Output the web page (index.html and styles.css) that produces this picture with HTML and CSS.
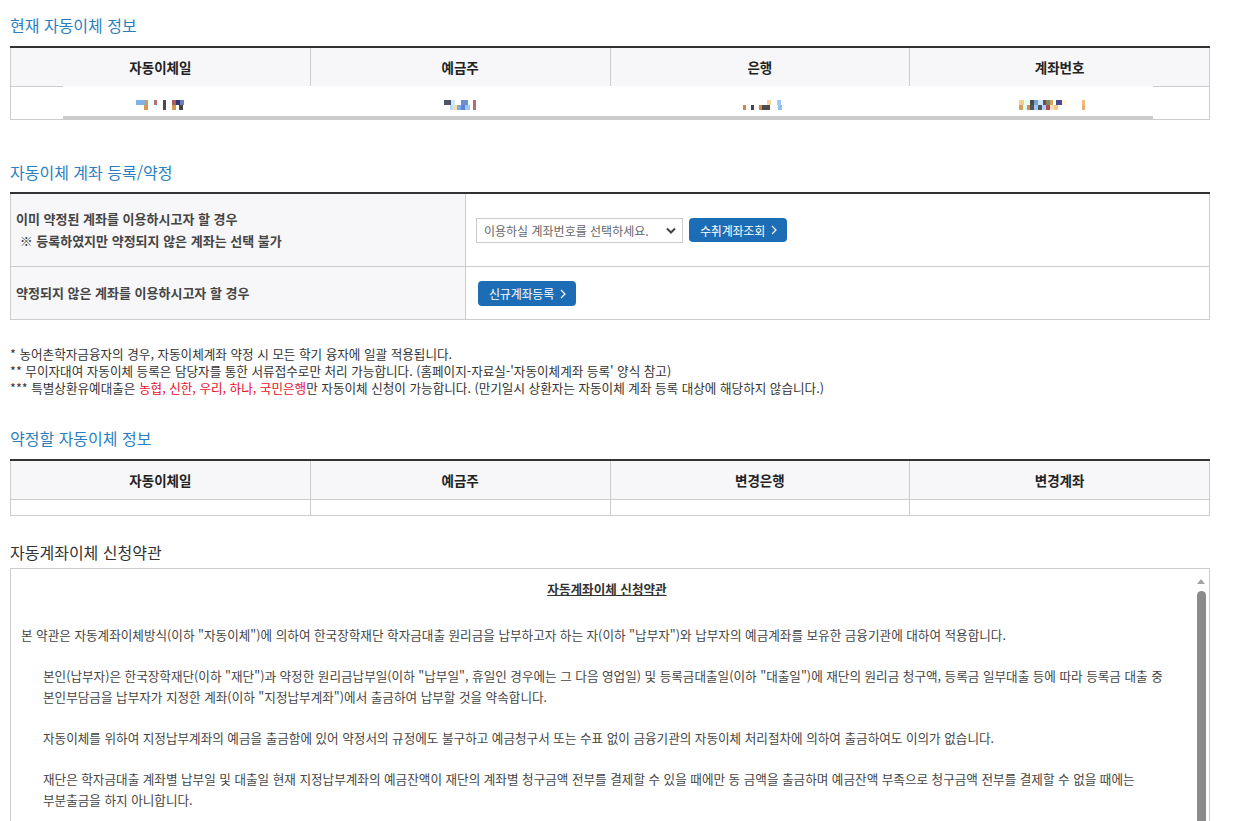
FILE: index.html
```html
<!DOCTYPE html>
<html lang="ko">
<head>
  <meta charset="UTF-8">
  <meta name="viewport" content="width=device-width, initial-scale=1.0">
  <title>자동이체 계좌 등록</title>
  <link rel="stylesheet" href="styles.css">
</head>
<body>
  <div class="page">

    <!-- Current auto transfer -->
    <h2 class="sec-title">현재 자동이체 정보</h2>
    <div class="grid-wrap">
      <table class="grid">
        <thead>
          <tr><th>자동이체일</th><th>예금주</th><th>은행</th><th>계좌번호</th></tr>
        </thead>
        <tbody>
          <tr>
            <td><span class="mosaic m-date"></span></td>
            <td><span class="mosaic m-owner"></span></td>
            <td><span class="mosaic m-bank"></span></td>
            <td><span class="mosaic m-acct"></span></td>
          </tr>
        </tbody>
      </table>
      <div class="mask"></div>
    </div>

    <!-- Register / agree -->
    <h2 class="sec-title sec-gap">자동이체 계좌 등록/약정</h2>
    <table class="form-grid">
      <tr class="row-tall">
        <th>이미 약정된 계좌를 이용하시고자 할 경우<br>&nbsp;※ 등록하였지만 약정되지 않은 계좌는 선택 불가</th>
        <td>
          <div class="field-line">
            <span class="select-box">
              <select class="acct-select">
                <option>이용하실 계좌번호를 선택하세요.</option>
              </select>
              <svg class="select-arrow" width="10" height="7" viewBox="0 0 10 7"><path d="M1 1.5 L5 5.5 L9 1.5" fill="none" stroke="#444" stroke-width="2"/></svg>
            </span>
            <button class="btn">수취계좌조회
              <svg width="6" height="10" viewBox="0 0 6 10"><path d="M1 1 L5 5 L1 9" fill="none" stroke="#fff" stroke-width="1.2"/></svg>
            </button>
          </div>
        </td>
      </tr>
      <tr class="row-short">
        <th>약정되지 않은 계좌를 이용하시고자 할 경우</th>
        <td>
          <button class="btn btn-new">신규계좌등록
            <svg width="6" height="10" viewBox="0 0 6 10"><path d="M1 1 L5 5 L1 9" fill="none" stroke="#fff" stroke-width="1.2"/></svg>
          </button>
        </td>
      </tr>
    </table>

    <div class="notes">
      <p>* 농어촌학자금융자의 경우, 자동이체계좌 약정 시 모든 학기 융자에 일괄 적용됩니다.</p>
      <p>** 무이자대여 자동이체 등록은 담당자를 통한 서류접수로만 처리 가능합니다. (홈페이지-자료실-'자동이체계좌 등록' 양식 참고)</p>
      <p>*** 특별상환유예대출은 <span class="red">농협, 신한, 우리, 하나, 국민은행</span>만 자동이체 신청이 가능합니다. (만기일시 상환자는 자동이체 계좌 등록 대상에 해당하지 않습니다.)</p>
    </div>

    <!-- To be agreed -->
    <h2 class="sec-title sec-gap2">약정할 자동이체 정보</h2>
    <table class="grid grid-empty">
      <thead>
        <tr><th>자동이체일</th><th>예금주</th><th>변경은행</th><th>변경계좌</th></tr>
      </thead>
      <tbody>
        <tr><td></td><td></td><td></td><td></td></tr>
      </tbody>
    </table>

    <!-- Terms -->
    <h2 class="terms-title">자동계좌이체 신청약관</h2>
    <div class="terms-box">
      <div class="terms">
        <h3 class="terms-head">자동계좌이체 신청약관</h3>
        <p>본 약관은 자동계좌이체방식(이하 "자동이체")에 의하여 한국장학재단 학자금대출 원리금을 납부하고자 하는 자(이하 "납부자")와 납부자의 예금계좌를 보유한 금융기관에 대하여 적용합니다.</p>
        <p class="indent">본인(납부자)은 한국장학재단(이하 "재단")과 약정한 원리금납부일(이하 "납부일", 휴일인 경우에는 그 다음 영업일) 및 등록금대출일(이하 "대출일")에 재단의 원리금 청구액, 등록금 일부대출 등에 따라 등록금 대출 중 본인부담금을 납부자가 지정한 계좌(이하 "지정납부계좌")에서 출금하여 납부할 것을 약속합니다.</p>
        <p class="indent">자동이체를 위하여 지정납부계좌의 예금을 출금함에 있어 약정서의 규정에도 불구하고 예금청구서 또는 수표 없이 금융기관의 자동이체 처리절차에 의하여 출금하여도 이의가 없습니다.</p>
        <p class="indent">재단은 학자금대출 계좌별 납부일 및 대출일 현재 지정납부계좌의 예금잔액이 재단의 계좌별 청구금액 전부를 결제할 수 있을 때에만 동 금액을 출금하며 예금잔액 부족으로 청구금액 전부를 결제할 수 없을 때에는 부분출금을 하지 아니합니다.</p>
      </div>
      <div class="scroll-rail">
        <span class="scroll-up"></span>
        <span class="scroll-thumb"></span>
      </div>
    </div>

  </div>
</body>
</html>
```

FILE: styles.css
```css
/* General */
body {
  margin: 0;
  font-family: "Noto Sans CJK KR", "Noto Sans", sans-serif;
  color: #333;
  background: #fff;
  overflow: hidden;
}

.page {
  width: 1200px;
  padding: 15px 0 0 10px;
}

/* Section titles */
.sec-title {
  margin: 0 0 11px;
  font-size: 16px;
  font-weight: 400;
  line-height: 20px;
  color: #2b7fc1;
}

.sec-gap {
  margin-top: 42px;
  margin-bottom: 10px;
}

.sec-gap2 {
  margin-top: 32px;
}

/* Info tables */
.grid-wrap {
  position: relative;
}

.grid {
  width: 100%;
  border-collapse: collapse;
  table-layout: fixed;
  border-top: 2px solid #333;
}

.grid th {
  height: 38px;
  padding: 0;
  background: #f7f7f9;
  border: 1px solid #ccc;
  border-top: 0;
  font-size: 13.5px;
  font-weight: 700;
  color: #222;
}

.grid td {
  height: 32px;
  padding: 0;
  border: 1px solid #ccc;
  text-align: center;
  font-size: 12px;
}

.grid-empty td {
  height: 15px;
}

/* redaction box over the current data row */
.mask {
  position: absolute;
  left: 53px;
  right: 57px;
  top: 40px;
  bottom: 1px;
  background: #fff;
  border-bottom: 3px solid #ccc;
}

.mosaic {
  position: relative;
  z-index: 1;
  display: inline-block;
  height: 10px;
  vertical-align: middle;
  background-repeat: no-repeat;
  background-size: 100% 5px;
  background-position: 0 0, 0 5px;
}

.m-date {
  width: 53px;
  margin-left: 4px;
  background-image:
    linear-gradient(90deg, #7db3e6 0 9px, #d6994f 9px 12px, #eaffff 12px 18px, #b27373 18px 21px, #fff 21px 27px, #4b4b4b 27px 30px, #fff 30px 36px, #a85c5c 36px 40px, #2e3a6e 40px 44px, #6a7fc4 44px 48px, transparent 48px),
    linear-gradient(90deg, #fff 0 8px, #d6994f 8px 12px, #fff 12px 18px, #f2fbff 18px 21px, #fff 21px 27px, #4b4b4b 27px 30px, #fff 30px 36px, #d6994f 36px 40px, #fff 40px 43px, #444 43px 47px, transparent 47px);
}

.m-owner {
  width: 36px;
  margin-left: 4px;
  background-image:
    linear-gradient(90deg, #4e5468 0 7px, #cfe7ff 7px 11px, #fff 11px 17px, #6d8fd0 17px 24px, #fff 24px 29px, #b56b70 29px 32px, transparent 32px),
    linear-gradient(90deg, #fff 0 6px, #b5dcff 6px 9px, #f4e1a7 9px 13px, #84a9e8 13px 17px, #5b86d6 17px 21px, #9ac8ff 21px 26px, #fff 26px 29px, #b56b70 29px 32px, transparent 32px);
}

.m-bank {
  width: 40px;
  margin-left: 6px;
  background-image:
    linear-gradient(90deg, transparent 0 24px, #f2d8a0 24px 28px, transparent 28px 34px, #9ec8f4 34px 38px, transparent 38px),
    linear-gradient(90deg, #d18a3d 0 3px, transparent 3px 8px, #474747 8px 11px, transparent 11px 16px, #d18a3d 16px 19px, #4b4b4b 19px 27px, transparent 27px 32px, #eafcff 32px 35px, #8fc3f3 35px 39px, transparent 39px);
}

.m-acct {
  width: 81px;
  background-image:
    linear-gradient(90deg, #f6cc90 0 5px, #eaffee 5px 11px, #4b4b4b 11px 15px, #7aa3d8 15px 19px, #c9e8ff 19px 24px, #764b4b 24px 27px, #7b8b6a 27px 31px, #d9a25c 31px 34px, #fff 34px 37px, #4b4b8b 37px 43px, #fff6e0 43px 48px, transparent 48px 63px, #f3bd80 63px 66px, transparent 66px),
    linear-gradient(90deg, #d8a060 0 4px, #dcfff4 4px 8px, #c68f50 8px 11px, #555 11px 15px, #9cc8ff 15px 19px, #555 19px 23px, #aad0ff 23px 27px, #b04a58 27px 31px, #fbe1b0 31px 35px, #f0c890 35px 39px, #fff 39px 44px, transparent 44px 63px, #e8b070 63px 66px, transparent 66px);
}

/* Register form */
.form-grid {
  width: 100%;
  border-collapse: collapse;
  table-layout: fixed;
  border-top: 2px solid #333;
}

.form-grid th {
  width: 444px;
  padding: 0 5px;
  background: #f7f7f9;
  border: 1px solid #ccc;
  border-top: 0;
  text-align: left;
  font-size: 13px;
  font-weight: 700;
  line-height: 22px;
  color: #444;
}

.form-grid td {
  padding: 0 10px;
  border: 1px solid #ccc;
  border-top: 0;
}

.row-tall th,
.row-tall td {
  height: 72px;
}

.row-short th,
.row-short td {
  height: 52px;
}

.field-line {
  display: flex;
  align-items: center;
  gap: 6px;
}

.select-box {
  position: relative;
  display: inline-block;
}

.acct-select {
  appearance: none;
  -webkit-appearance: none;
  display: block;
  width: 207px;
  height: 25px;
  padding: 0 0 0 7px;
  border: 1px solid #ccc;
  border-radius: 0;
  background: #fff;
  font-family: "Noto Sans CJK KR", "Noto Sans", sans-serif;
  font-size: 12px;
  color: #666;
}

.select-arrow {
  position: absolute;
  right: 7px;
  top: 9px;
  pointer-events: none;
}

.btn {
  display: inline-flex;
  align-items: center;
  gap: 6px;
  height: 24px;
  padding: 0 10px 0 11px;
  border: 0;
  border-radius: 4px;
  background: #1c6db5;
  color: #fff;
  font-family: "Noto Sans CJK KR", "Noto Sans", sans-serif;
  font-size: 12px;
  letter-spacing: -0.2px;
  cursor: pointer;
}

.btn-new {
  height: 25px;
  margin-left: 2px;
}

/* Notes */
.notes {
  margin-top: 25px;
  font-size: 12.6px;
  line-height: 17px;
  color: #333;
}

.notes p {
  margin: 0;
}

.red {
  color: #e8112d;
}

/* Terms */
.terms-title {
  margin: 26px 0 6px;
  font-size: 16px;
  font-weight: 400;
  line-height: 20px;
  color: #333;
}

.terms-box {
  display: flex;
  height: 290px;
  border: 1px solid #ccc;
  overflow: hidden;
}

.terms {
  flex: 1;
  padding: 9px 25px 0 10px;
  font-size: 12.6px;
  line-height: 21px;
  color: #444;
  word-break: keep-all;
}

.terms-head {
  margin: 0 0 25px;
  padding-left: 25px;
  font-size: 12.6px;
  font-weight: 700;
  text-align: center;
  text-decoration: underline;
  color: #333;
}

.terms p {
  margin: 0 0 20px;
}

.terms .indent {
  padding-left: 22px;
}

/* scrollbar of the terms box */
.scroll-rail {
  width: 16px;
  display: flex;
  flex-direction: column;
  align-items: center;
  padding-top: 10px;
}

.scroll-up {
  width: 0;
  height: 0;
  border-left: 4px solid transparent;
  border-right: 4px solid transparent;
  border-bottom: 5px solid #a3a3a3;
}

.scroll-thumb {
  flex: 1;
  width: 9px;
  margin: 7px 0 20px 1px;
  background: #8b8b8b;
  border-radius: 5px;
}
```
